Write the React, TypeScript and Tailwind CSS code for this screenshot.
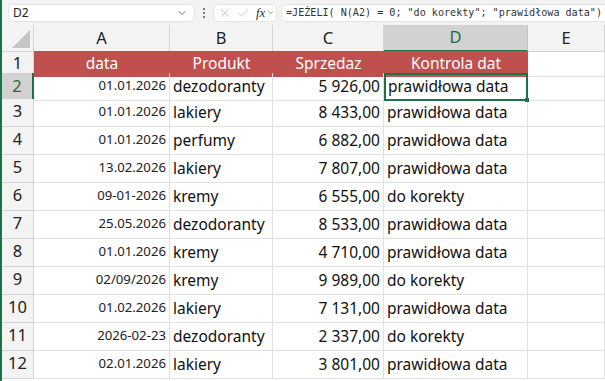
import { ChevronDown, X, Check } from 'lucide-react';

const rows = [
  ['01.01.2026', 'dezodoranty', '5 926,00', 'prawidłowa data'],
  ['01.01.2026', 'lakiery', '8 433,00', 'prawidłowa data'],
  ['01.01.2026', 'perfumy', '6 882,00', 'prawidłowa data'],
  ['13.02.2026', 'lakiery', '7 807,00', 'prawidłowa data'],
  ['09-01-2026', 'kremy', '6 555,00', 'do korekty'],
  ['25.05.2026', 'dezodoranty', '8 533,00', 'prawidłowa data'],
  ['01.01.2026', 'kremy', '4 710,00', 'prawidłowa data'],
  ['02/09/2026', 'kremy', '9 989,00', 'do korekty'],
  ['01.02.2026', 'lakiery', '7 131,00', 'prawidłowa data'],
  ['2026-02-23', 'dezodoranty', '2 337,00', 'do korekty'],
  ['02.01.2026', 'lakiery', '3 801,00', 'prawidłowa data'],
];

const grid = 'grid grid-cols-[32px_136px_103px_111px_144px_1fr]';
const cell = 'border-r border-b border-[#e1e1e1] flex items-end pb-[2px] overflow-hidden whitespace-nowrap';
const rowHead = 'border-r border-b border-[#d4d4d4] bg-[#f3f3f3] flex items-end pb-[2px] justify-center text-[16.5px] text-[#222]';

export default function App() {
  return (
    <div
      className="w-[605px] h-[381px] overflow-hidden bg-white border-l-2 border-[#1e7145]"
      style={{ fontFamily: '"Noto Sans", sans-serif' }}
    >
      {/* Formula bar */}
      <div className="h-[25px] bg-[#f3f3f3] flex items-center pl-[6px] gap-[4px]">
        <div className="w-[187px] h-[18px] bg-white rounded-[5px] border border-[#e4e4e4] flex items-center justify-between pl-[4px] pr-[6px]">
          <span className="text-[12px] text-[#222]">D2</span>
          <ChevronDown size={12} strokeWidth={1.6} className="text-[#444]" />
        </div>
        <div className="w-[10px] flex flex-col items-center gap-[2px]">
          <span className="w-[2px] h-[2px] bg-[#555] rounded-full" />
          <span className="w-[2px] h-[2px] bg-[#555] rounded-full" />
          <span className="w-[2px] h-[2px] bg-[#555] rounded-full" />
        </div>
        <div className="w-[64px] h-[18px] bg-white rounded-[5px] border border-[#e4e4e4] flex items-center pl-[4px] gap-[4px]">
          <X size={14} strokeWidth={1} className="text-[#aaa]" />
          <Check size={14} strokeWidth={1} className="text-[#aaa]" />
          <span
            className="italic text-[13px] text-[#333] leading-none ml-[2px]"
            style={{ fontFamily: '"Liberation Serif", serif' }}
          >
            fx
          </span>
          <ChevronDown size={9} strokeWidth={1.4} className="text-[#555] -ml-[3px]" />
        </div>
        <div className="flex-1 h-[18px] bg-white rounded-l-[5px] border border-r-0 border-[#e4e4e4] flex items-center pl-[4px] overflow-hidden whitespace-nowrap">
          <span
            className="text-[10.1px] text-[#333]"
            style={{ fontFamily: '"DejaVu Sans Mono", monospace' }}
          >
            =JEŻELI( N(A2) = 0; "do korekty"; "prawidłowa data")
          </span>
        </div>
      </div>

      {/* Column headers */}
      <div className={`${grid} h-[26px] bg-[#f3f3f3]`}>
        <div className="border-r border-b border-[#d4d4d4] relative overflow-hidden">
          <div className="absolute right-[3px] bottom-[3px] w-0 h-0 border-l-[18px] border-l-transparent border-b-[18px] border-b-[#c6c6c6]" />
        </div>
        {['A', 'B', 'C', 'D', 'E'].map((c) =>
          c === 'D' ? (
            <div key={c} className="bg-[#d2d2d2] border-r border-[#c4c4c4] border-b-2 border-b-[#1e7145] flex items-center justify-center text-[16.5px] text-[#1e6b41]">
              {c}
            </div>
          ) : (
            <div key={c} className="border-r border-b border-[#d4d4d4] flex items-center justify-center text-[16.5px] text-[#222]">
              {c}
            </div>
          )
        )}
      </div>

      {/* Header row 1 */}
      <div className={`${grid} h-[22px]`}>
        <div className="border-r border-b border-[#d4d4d4] bg-[#f3f3f3] flex items-center justify-center text-[16.5px] text-[#222]">1</div>
        {['data', 'Produkt', 'Sprzedaz', 'Kontrola dat'].map((h) => (
          <div key={h} className="bg-[#c0504d] border-b border-[#c0504d] flex items-center justify-center text-[15.5px] text-white">
            {h}
          </div>
        ))}
        <div className={cell} />
      </div>

      {/* Data rows */}
      {rows.map((r, i) => {
        const selected = i === 0;
        return (
          <div key={i} className={`${grid} ${selected ? 'h-[26px]' : 'h-[28px]'}`}>
            {selected ? (
              <div className="border-b border-[#d4d4d4] border-r-2 border-r-[#1e7145] bg-[#d2d2d2] flex items-end pb-[2px] justify-center text-[16.5px] text-[#1e6b41]">
                2
              </div>
            ) : (
              <div className={rowHead}>{i + 2}</div>
            )}
            <div className={`${cell} justify-end pr-[3px] text-[13.2px] text-[#222] pb-[4px]`}>{r[0]}</div>
            <div className={`${cell} pl-[3px] text-[15.5px] text-[#111]`}>{r[1]}</div>
            <div className={`${cell} justify-end pr-[3px] text-[15.5px] text-[#111]`}>{r[2]}</div>
            {selected ? (
              <div className="relative border-2 border-[#1e7145] flex items-end pb-[1px] pl-[2px] text-[15.5px] text-[#111] whitespace-nowrap">
                {r[3]}
                <span className="absolute -right-[3px] -bottom-[3px] w-[4px] h-[4px] bg-[#1e7145]" />
              </div>
            ) : (
              <div className={`${cell} pl-[3px] text-[15.5px] text-[#111]`}>{r[3]}</div>
            )}
            <div className={cell} />
          </div>
        );
      })}
    </div>
  );
}
